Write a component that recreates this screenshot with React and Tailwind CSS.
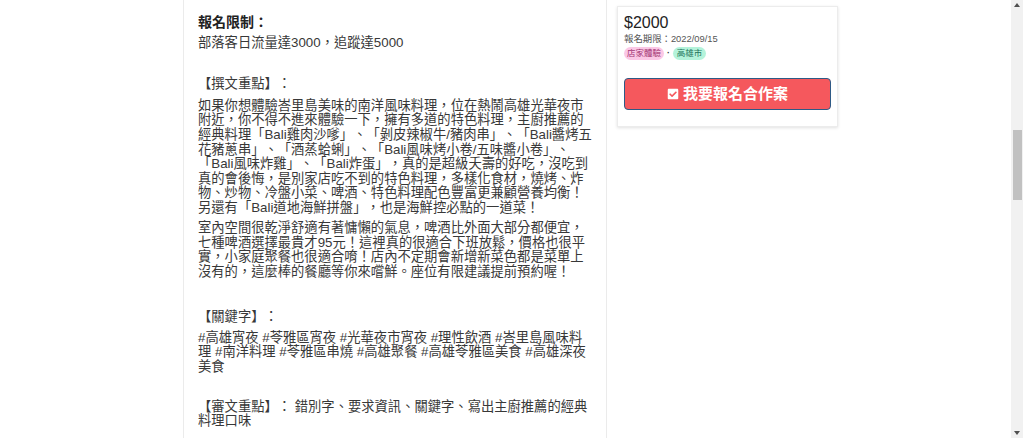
import React from "react";
import { FaCheckSquare } from "react-icons/fa";

const writingLines = [
  "如果你想體驗峇里島美味的南洋風味料理，位在熱鬧高雄光華夜市",
  "附近，你不得不進來體驗一下，擁有多道的特色料理，主廚推薦的",
  "經典料理「Bali雞肉沙嗲」、「剝皮辣椒牛/豬肉串」、「Bali醬烤五",
  "花豬蔥串」、「酒蒸蛤蜊」、「Bali風味烤小卷/五味醬小卷」、",
  "「Bali風味炸雞」、「Bali炸蛋」，真的是超級夭壽的好吃，沒吃到",
  "真的會後悔，是別家店吃不到的特色料理，多樣化食材，燒烤、炸",
  "物、炒物、冷盤小菜、啤酒、特色料理配色豐富更兼顧營養均衡！",
  "另還有「Bali道地海鮮拼盤」，也是海鮮控必點的一道菜！",
];

const placeLines = [
  "室內空間很乾淨舒適有著慵懶的氣息，啤酒比外面大部分都便宜，",
  "七種啤酒選擇最貴才95元！這裡真的很適合下班放鬆，價格也很平",
  "實，小家庭聚餐也很適合唷！店內不定期會新增新菜色都是菜單上",
  "沒有的，這麼棒的餐廳等你來嚐鮮。座位有限建議提前預約喔！",
];

const keywordLines = [
  "#高雄宵夜 #苓雅區宵夜 #光華夜市宵夜 #理性飲酒 #峇里島風味料",
  "理 #南洋料理 #苓雅區串燒 #高雄聚餐 #高雄苓雅區美食 #高雄深夜",
  "美食",
];

const Lines = ({ lines }) =>
  lines.map((line, i) => (
    <span key={i} className="block whitespace-nowrap">
      {line}
    </span>
  ));

const App = () => {
  return (
    <div className="flex h-[438px] overflow-hidden bg-white font-['Liberation_Sans','Noto_Sans_CJK_TC',sans-serif] text-[#383838] [text-spacing-trim:space-all]">
      <div className="w-[183px] shrink-0" />

      <div className="w-[424px] shrink-0 border-x border-[#ebebeb] pl-[14px] pr-[12px] pt-[15px] text-[13.3px] leading-[14.6px]">
        <h3 className="text-[14px] font-bold text-[#222]">報名限制：</h3>
        <p className="mt-[6px]">部落客日流量達3000，追蹤達5000</p>

        <h3 className="mt-[27px]">【撰文重點】：</h3>
        <p className="mt-[7px]">
          <Lines lines={writingLines} />
        </p>
        <p className="mt-[5.5px]">
          <Lines lines={placeLines} />
        </p>

        <h3 className="mt-[30.5px]">【關鍵字】：</h3>
        <p className="mt-[6.4px]">
          <Lines lines={keywordLines} />
        </p>

        <p className="mt-[25px]">
          <span className="block whitespace-nowrap">【審文重點】： 錯別字、要求資訊、關鍵字、寫出主廚推薦的經典</span>
          <span className="block">料理口味</span>
        </p>
      </div>

      <div className="flex-1 pl-[10px] pt-[6px]">
        <div className="w-[221px] border border-[#ececec] bg-white px-[6px] pt-[7px] pb-[16px] shadow-[0_1px_3px_rgba(0,0,0,0.12)]">
          <div className="text-[16px] leading-[18px] text-[#222]">$2000</div>
          <div className="mt-[1px] text-[9.4px] leading-[11px] text-[#555]">報名期限：2022/09/15</div>
          <div className="mt-[3px] flex items-center gap-[3px] text-[8.5px] leading-[13px]">
            <span className="rounded-full bg-[#fbc8e6] px-[3px] text-[#a33774]">店家體驗</span>
            <span className="font-bold text-[#333]">·</span>
            <span className="rounded-full bg-[#b4f3da] px-[4px] text-[#23735a]">高雄市</span>
          </div>
          <button className="mt-[18px] flex h-[32px] w-[207px] items-center justify-center gap-[4px] rounded-[4px] border-[1.5px] border-[#2e5a86] bg-[#f5585d] text-[15px] font-bold text-white">
            <FaCheckSquare className="h-[12px] w-[12px]" />
            我要報名合作案
          </button>
        </div>
      </div>

      <div className="flex w-[12px] shrink-0 flex-col items-center bg-[#f1f1f1]">
        <div className="mt-[3px] h-0 w-0 border-x-[3.5px] border-b-[4px] border-x-transparent border-b-[#505050]" />
        <div className="mt-[123px] h-[70px] w-[9px] bg-[#c1c1c1]" />
        <div className="flex-1" />
        <div className="mb-[3px] h-0 w-0 border-x-[3.5px] border-t-[4px] border-x-transparent border-t-[#505050]" />
      </div>
    </div>
  );
};

export default App;
